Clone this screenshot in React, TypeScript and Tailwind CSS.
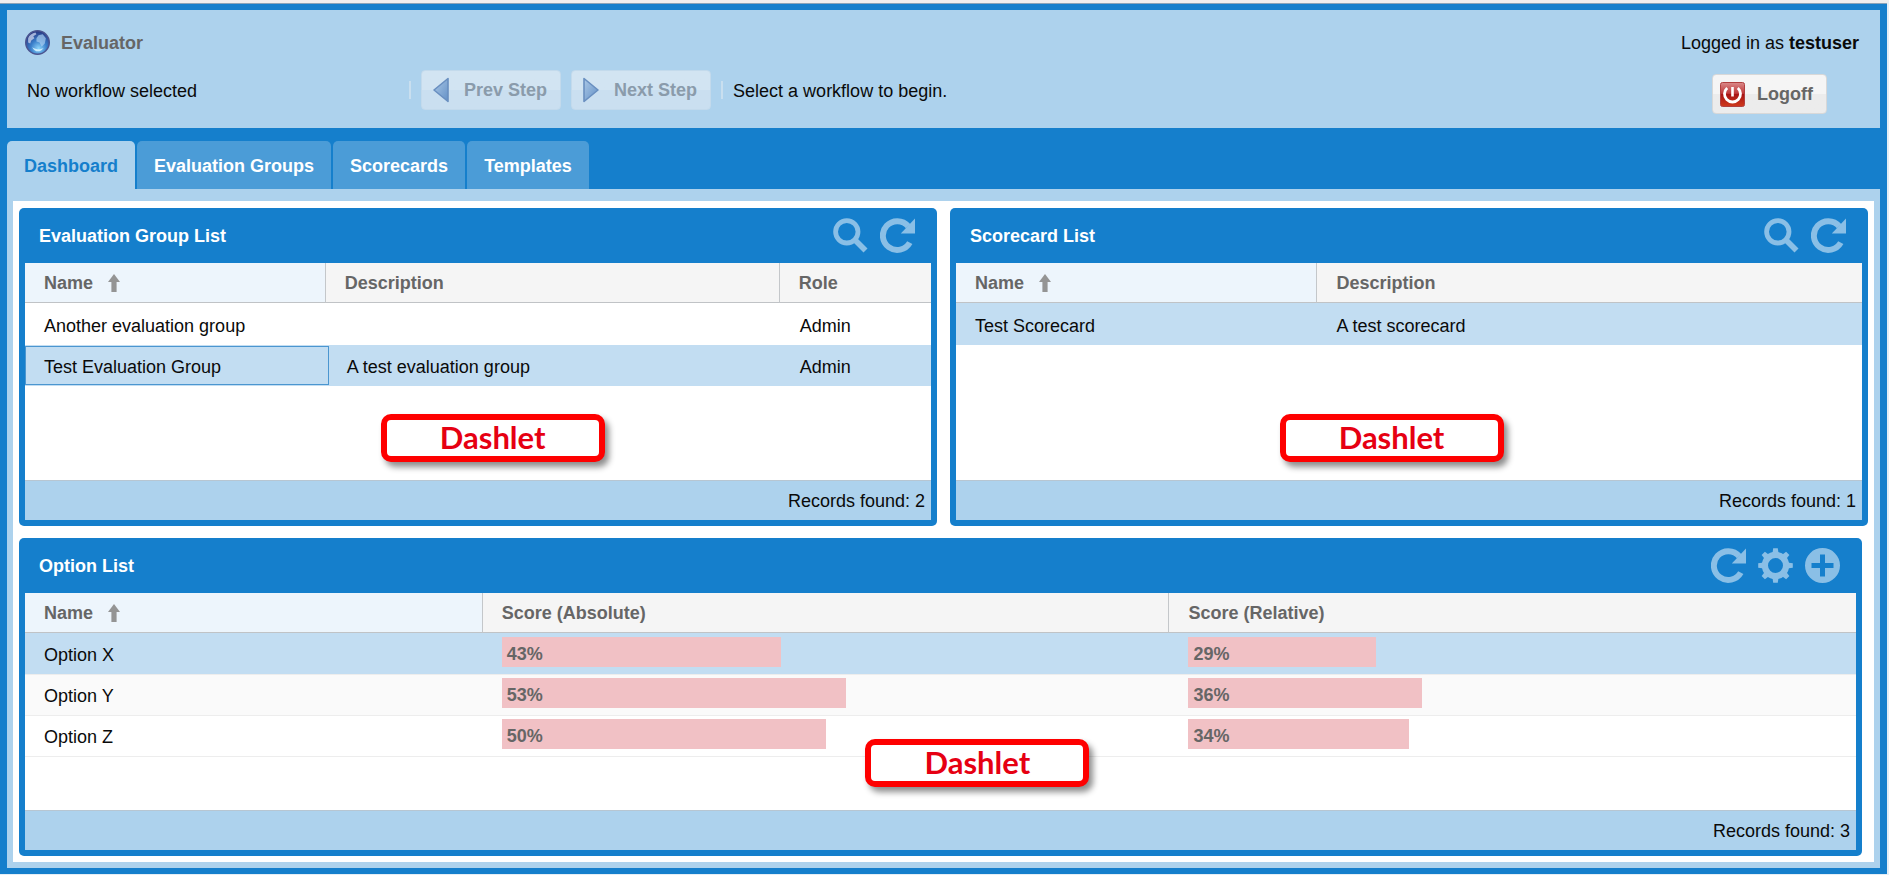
import type { ReactNode } from "react";

type ToolName = "search" | "refresh" | "gear" | "add";

const toolLabels: Record<ToolName, string> = {
  search: "Search",
  refresh: "Refresh",
  gear: "Settings",
  add: "Add",
};

const gearAngles = [0, 45, 90, 135, 180, 225, 270, 315];

function ToolIcon({ name }: { name: ToolName }) {
  return (
    <svg viewBox="0 0 35 35" className="block size-[35px] text-[#8abfe6]" fill="none" stroke="currentColor" aria-hidden="true">
      {name === "search" && (
        <>
          <circle cx="13.8" cy="13.8" r="11.2" strokeWidth="4.8" />
          <path d="M21.5 21.5 L32.5 32.5" strokeWidth="5.6" />
        </>
      )}
      {name === "refresh" && (
        <>
          <path d="M29.8 24.6 A14.4 14.4 0 1 1 28.2 8.2" strokeWidth="6" />
          <path d="M35 0.5 V15.4 H20.8 Z" fill="currentColor" stroke="none" />
        </>
      )}
      {name === "gear" && (
        <>
          <circle cx="17.5" cy="17.5" r="10.6" strokeWidth="6.2" />
          {gearAngles.map((a) => (
            <path key={a} d="M14.4 6 L15.2 0.2 H19.8 L20.6 6 Z" fill="currentColor" stroke="none" transform={`rotate(${a} 17.5 17.5)`} />
          ))}
        </>
      )}
      {name === "add" && (
        <path
          fill="currentColor"
          stroke="none"
          fillRule="evenodd"
          d="M17.5 0 A17.5 17.5 0 1 1 17.5 35 A17.5 17.5 0 1 1 17.5 0 Z M15 6.5 V15 H6.5 V20 H15 V28.5 H20 V20 H28.5 V15 H20 V6.5 Z"
        />
      )}
    </svg>
  );
}

function Globe() {
  return (
    <svg viewBox="0 0 24 24" className="size-[25px]" aria-hidden="true">
      <defs>
        <radialGradient id="sea" cx="0.55" cy="0.75" r="0.75">
          <stop offset="0" stopColor="#8fd6fb" />
          <stop offset="0.45" stopColor="#3a7fca" />
          <stop offset="1" stopColor="#27337f" />
        </radialGradient>
      </defs>
      <circle cx="12" cy="12" r="11.3" fill="url(#sea)" stroke="#4c5590" strokeWidth="1.4" />
      <path d="M3 8 C4 5 7 3 10 2.5 L11 4 L8 6 L9 8 L6 10 L5 13 L3 12 Z" fill="#c3cdea" opacity="0.8" />
      <path d="M13 5 L17 4 L20 8 L19 13 L16 16 L14 12 L11 11 L11 8 Z" fill="#a9cdf0" opacity="0.7" />
      <path d="M7 16.5 C9 21.5 15 22 18 17 C15 19 11 19 7 16.5 Z" fill="#d6f3ff" opacity="0.9" />
    </svg>
  );
}

function StepArrow({ back = false }: { back?: boolean }) {
  const id = back ? "arrow-back" : "arrow-next";
  return (
    <svg viewBox="0 0 24 26" className="h-[26px] w-6" aria-hidden="true">
      <defs>
        <linearGradient id={id} x1="0" y1="0" x2="1" y2="1">
          <stop offset="0" stopColor="#abc8e6" />
          <stop offset="1" stopColor="#6390c6" />
        </linearGradient>
      </defs>
      <path
        d={back ? "M18 1.5 V24.5 L4 13 Z" : "M4 1.5 V24.5 L18 13 Z"}
        fill={`url(#${id})`}
        stroke="#698fc0"
        strokeWidth="1.6"
        strokeLinejoin="round"
      />
    </svg>
  );
}

function PowerIcon() {
  return (
    <svg viewBox="0 0 25 25" className="size-[25px]" aria-hidden="true">
      <defs>
        <linearGradient id="power" x1="0" y1="0" x2="0" y2="1">
          <stop offset="0" stopColor="#d98a8a" />
          <stop offset="0.45" stopColor="#c0393a" />
          <stop offset="0.5" stopColor="#a81414" />
          <stop offset="1" stopColor="#cf3a1c" />
        </linearGradient>
      </defs>
      <rect x="0.5" y="0.5" width="24" height="24" rx="2" fill="url(#power)" stroke="#b04040" />
      <path d="M7.2 6 A8 8 0 1 0 17.8 6" fill="none" stroke="#fff" strokeWidth="2.8" />
      <path d="M12.5 5 V14.5" stroke="#fff" strokeWidth="2.6" />
    </svg>
  );
}

function SortArrow() {
  return (
    <svg viewBox="0 0 12 18" className="h-[18px] w-3" fill="#949494" aria-hidden="true">
      <path d="M6 0 L12 8 H8.6 V18 H3.4 V8 H0 Z" />
    </svg>
  );
}

function Header({ children, sorted = false, last = false }: { children: string; sorted?: boolean; last?: boolean }) {
  return (
    <th
      scope="col"
      aria-sort={sorted ? "ascending" : undefined}
      className={`h-10 border-b border-b-[#c0c3c6] px-[19px] pt-px text-left font-bold text-[#666] ${sorted ? "bg-[#edf5fc]" : "bg-[#f5f5f5]"} ${last ? "" : "border-r border-r-[#c4c7ca]"}`}
    >
      <span className="flex items-center gap-[15px]">
        {children}
        {sorted && <SortArrow />}
      </span>
    </th>
  );
}

function Callout({ place }: { place: string }) {
  return (
    <div
      className={`absolute flex h-12 w-56 -translate-x-1/2 items-center justify-center rounded-[10px] border-[6px] border-[#fe0000] bg-white pb-[2px] font-['Lato',sans-serif] text-[31px] leading-none font-bold text-[#e60012] shadow-[4px_5px_6px_rgba(0,0,0,0.45)] ${place}`}
    >
      Dashlet
    </div>
  );
}

function Dashlet({ title, tools, count, callout, className = "", children }: {
  title: string;
  tools: ToolName[];
  count: number;
  callout: string;
  className?: string;
  children: ReactNode;
}) {
  return (
    <section className={`relative flex flex-col rounded-[5px] bg-[#157fcc] px-[6px] pb-[6px] ${className}`}>
      <header className="flex h-[55px] shrink-0 items-center justify-between pr-4 pl-[14px]">
        <h2 className="font-bold text-white">{title}</h2>
        <div className="flex gap-3">
          {tools.map((t) => (
            <button key={t} type="button" aria-label={toolLabels[t]}>
              <ToolIcon name={t} />
            </button>
          ))}
        </div>
      </header>
      <div className="flex-1 bg-white">{children}</div>
      <footer className="flex h-10 shrink-0 items-center justify-end border-t border-[#b7c6d2] bg-[#add2ed] pt-px pr-[6px]">
        Records found: {count}
      </footer>
      <Callout place={callout} />
    </section>
  );
}

const options = [
  { name: "Option X", absolute: 43, relative: 29 },
  { name: "Option Y", absolute: 53, relative: 36 },
  { name: "Option Z", absolute: 50, relative: 34 },
];

function Score({ value }: { value: number }) {
  return (
    <div className="flex h-[30px] items-center bg-[#f1c1c5] pt-[3px] pl-[5px] font-bold text-[#666]" style={{ width: `${value}%` }}>
      {value}%
    </div>
  );
}

const tabs = ["Dashboard", "Evaluation Groups", "Scorecards", "Templates"];

const stepButton =
  "flex h-10 items-center gap-[10px] rounded-[4px] border border-[#c3daec] bg-linear-to-b from-[#d2e4f2] from-50% to-[#cadff0] to-50% pr-[13px] pl-2 font-bold text-[#8a9bab]";

export default function App() {
  return (
    <div className="flex min-h-screen flex-col border-t-[3px] border-r-2 border-b border-t-[#eeeeee] border-r-[#e4eef6] border-b-[#e4eef6] font-['Liberation_Sans',Arial,sans-serif] text-[18px] leading-6 text-[#0a0a0a]">
      <div className="flex flex-1 flex-col border-t border-[#8aa3b8] bg-[#157fcc] px-[7px] pt-[6px] pb-[6px]">
        <header className="flex min-h-[118px] justify-between bg-[#add2ed] pt-5 pr-[21px] pl-[18px]">
          <div>
            <div className="flex items-center gap-[11px]">
              <Globe />
              <h1 className="pt-px font-bold text-[#666]">Evaluator</h1>
            </div>
            <div className="mt-[15px] flex items-center">
              <p className="w-[383px] pt-[2px] pl-[2px]">No workflow selected</p>
              <span className="mr-[10px] ml-px h-[18px] w-[2px] bg-[#c9dfef]" />
              <button type="button" disabled className={`${stepButton} mr-[10px]`}>
                <StepArrow back />
                Prev Step
              </button>
              <button type="button" disabled className={stepButton}>
                <StepArrow />
                Next Step
              </button>
              <span className="mx-[10px] h-[18px] w-[2px] bg-[#c9dfef]" />
              <p className="pt-[2px]">Select a workflow to begin.</p>
            </div>
          </div>
          <div className="flex flex-col items-end">
            <p className="pt-px">
              Logged in as <b>testuser</b>
            </p>
            <button
              type="button"
              className="mt-[19px] mr-8 flex h-10 items-center gap-3 rounded-[4px] border border-[#d8d8d8] bg-linear-to-b from-[#f5f5f5] from-50% to-[#ececec] to-50% pr-[13px] pl-[7px] font-bold text-[#666]"
            >
              <PowerIcon />
              Logoff
            </button>
          </div>
        </header>

        <nav role="tablist" className="mt-[13px] flex gap-[2px]">
          {tabs.map((tab, i) => (
            <button
              key={tab}
              type="button"
              role="tab"
              aria-selected={i === 0}
              className={`h-12 rounded-t-[5px] px-[17px] pt-px font-bold ${i === 0 ? "bg-[#add2ed] text-[#157fcc]" : "bg-[#4b9cd7] text-white"}`}
            >
              {tab}
            </button>
          ))}
        </nav>

        <main className="flex flex-1 flex-col bg-[#add2ed] px-[6px] pt-3 pb-[6px]">
          <div className="grid flex-1 auto-rows-fr grid-cols-2 gap-x-[13px] gap-y-3 bg-white px-[6px] pt-[7px] pb-[6px]">
            <Dashlet title="Evaluation Group List" tools={["search", "refresh"]} count={2} callout="top-[206px] left-[51.6%]">
              <table className="w-full table-fixed border-separate border-spacing-0">
                <colgroup>
                  <col className="w-[33.2%]" />
                  <col />
                  <col className="w-[16.7%]" />
                </colgroup>
                <thead>
                  <tr>
                    <Header sorted>Name</Header>
                    <Header>Description</Header>
                    <Header last>Role</Header>
                  </tr>
                </thead>
                <tbody>
                  <tr>
                    <td className="h-[42px] pt-1 pl-[19px]">Another evaluation group</td>
                    <td className="pt-1 pl-[21px]" />
                    <td className="pt-1 pl-5">Admin</td>
                  </tr>
                  <tr className="bg-[#c2ddf2]">
                    <td className="relative h-[41px] pt-[2px] pl-[19px]">
                      Test Evaluation Group
                      <span className="absolute top-px -right-[3px] bottom-px left-0 border border-[#4b96d0]" />
                    </td>
                    <td className="pt-[2px] pl-[21px]">A test evaluation group</td>
                    <td className="pt-[2px] pl-5">Admin</td>
                  </tr>
                </tbody>
              </table>
            </Dashlet>

            <Dashlet title="Scorecard List" tools={["search", "refresh"]} count={1} callout="top-[206px] left-[48.1%]">
              <table className="w-full table-fixed border-separate border-spacing-0">
                <colgroup>
                  <col className="w-[39.9%]" />
                  <col />
                </colgroup>
                <thead>
                  <tr>
                    <Header sorted>Name</Header>
                    <Header last>Description</Header>
                  </tr>
                </thead>
                <tbody>
                  <tr className="bg-[#c2ddf2]">
                    <td className="h-[42px] pt-1 pl-[19px]">Test Scorecard</td>
                    <td className="pt-1 pl-[19px]">A test scorecard</td>
                  </tr>
                </tbody>
              </table>
            </Dashlet>

            <Dashlet
              title="Option List"
              tools={["refresh", "gear", "add"]}
              count={3}
              callout="top-[201px] left-[52%]"
              className="col-span-2 mr-[6px]"
            >
              <table className="w-full table-fixed border-separate border-spacing-0">
                <colgroup>
                  <col className="w-1/4" />
                  <col className="w-[37.5%]" />
                  <col className="w-[37.5%]" />
                </colgroup>
                <thead>
                  <tr>
                    <Header sorted>Name</Header>
                    <Header>Score (Absolute)</Header>
                    <Header last>Score (Relative)</Header>
                  </tr>
                </thead>
                <tbody className="[&_td]:border-b [&_td]:border-[#ededed]">
                  {options.map((o, i) => (
                    <tr key={o.name} className={i === 0 ? "h-[42px] bg-[#c2ddf2] [&_td]:border-[#c2ddf2]" : i === 1 ? "h-[41px] bg-[#fafafa]" : "h-[41px]"}>
                      <td className="pt-[2px] pl-[19px]">{o.name}</td>
                      <td className="px-[19px] pb-[7px] align-bottom">
                        <Score value={o.absolute} />
                      </td>
                      <td className="px-[19px] pb-[7px] align-bottom">
                        <Score value={o.relative} />
                      </td>
                    </tr>
                  ))}
                </tbody>
              </table>
            </Dashlet>
          </div>
        </main>
      </div>
    </div>
  );
}
